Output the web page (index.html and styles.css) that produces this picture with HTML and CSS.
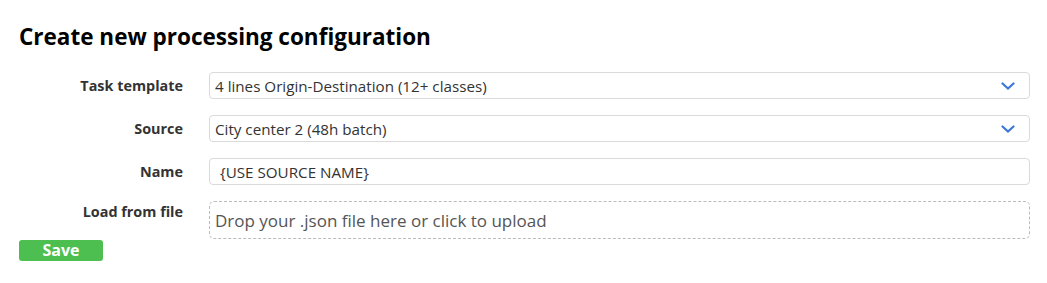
FILE: index.html
```html
<!DOCTYPE html>
<html lang="en">
<head>
    <meta charset="UTF-8">
    <title>Create new processing configuration</title>
    <link rel="stylesheet" href="styles.css">
</head>
<body>
    <div class="page">
        <h1>Create new processing configuration</h1>

        <form class="config-form">
            <div class="form-row">
                <label>Task template</label>
                <div class="select-box">
                    <span>4 lines Origin-Destination (12+ classes)</span>
                    <svg class="chevron" width="14" height="8" viewBox="0 0 14 8"><path d="M1.5 1.5 L7 6.5 L12.5 1.5" fill="none" stroke="#3b78d8" stroke-width="2.2" stroke-linecap="round"/></svg>
                </div>
            </div>
            <div class="form-row">
                <label>Source</label>
                <div class="select-box">
                    <span>City center 2 (48h batch)</span>
                    <svg class="chevron" width="14" height="8" viewBox="0 0 14 8"><path d="M1.5 1.5 L7 6.5 L12.5 1.5" fill="none" stroke="#3b78d8" stroke-width="2.2" stroke-linecap="round"/></svg>
                </div>
            </div>
            <div class="form-row">
                <label>Name</label>
                <div class="text-box">{USE SOURCE NAME}</div>
            </div>
            <div class="form-row top">
                <label>Load from file</label>
                <div class="drop-zone">Drop your .json file here or click to upload</div>
            </div>
            <button type="button" class="btn-save">Save</button>
        </form>
    </div>
</body>
</html>
```

FILE: styles.css
```css
/* base */
body {
    margin: 0;
    font-family: "Open Sans", "Noto Sans", Arial, sans-serif;
    color: #333;
    background: #fff;
}
.page {
    padding: 22px 17px 0 19px;
}
h1 {
    margin: 0 0 20px;
    font-size: 22.5px;
    font-weight: 700;
    color: #000;
    line-height: 30px;
}

/* form */
.form-row {
    display: grid;
    grid-template-columns: 164px 1fr;
    column-gap: 26px;
    align-items: center;
    margin-bottom: 16px;
}
.form-row.top {
    align-items: start;
    margin-bottom: 0;
}
.form-row label {
    text-align: right;
    font-weight: 700;
    font-size: 14.4px;
    color: #333;
}
.form-row.top label {
    padding-top: 1px;
}
.select-box, .text-box {
    height: 27px;
    box-sizing: border-box;
    border: 1px solid #dadada;
    border-radius: 4px;
    font-size: 15.2px;
    display: flex;
    align-items: center;
    padding: 0 14px 0 5px;
}
.select-box {
    justify-content: space-between;
}
.text-box {
    padding-left: 10px;
}
.drop-zone {
    height: 38px;
    box-sizing: border-box;
    border: 1px dashed #bbb;
    border-radius: 5px;
    font-size: 17px;
    color: #555;
    display: flex;
    align-items: center;
    padding-left: 5px;
}
.btn-save {
    display: block;
    margin-top: 1px;
    width: 84px;
    height: 21px;
    padding: 0;
    border: none;
    border-radius: 3px;
    background: #4cbf50;
    color: #fff;
    font-family: inherit;
    font-weight: 700;
    font-size: 16px;
    line-height: 21px;
}
```
